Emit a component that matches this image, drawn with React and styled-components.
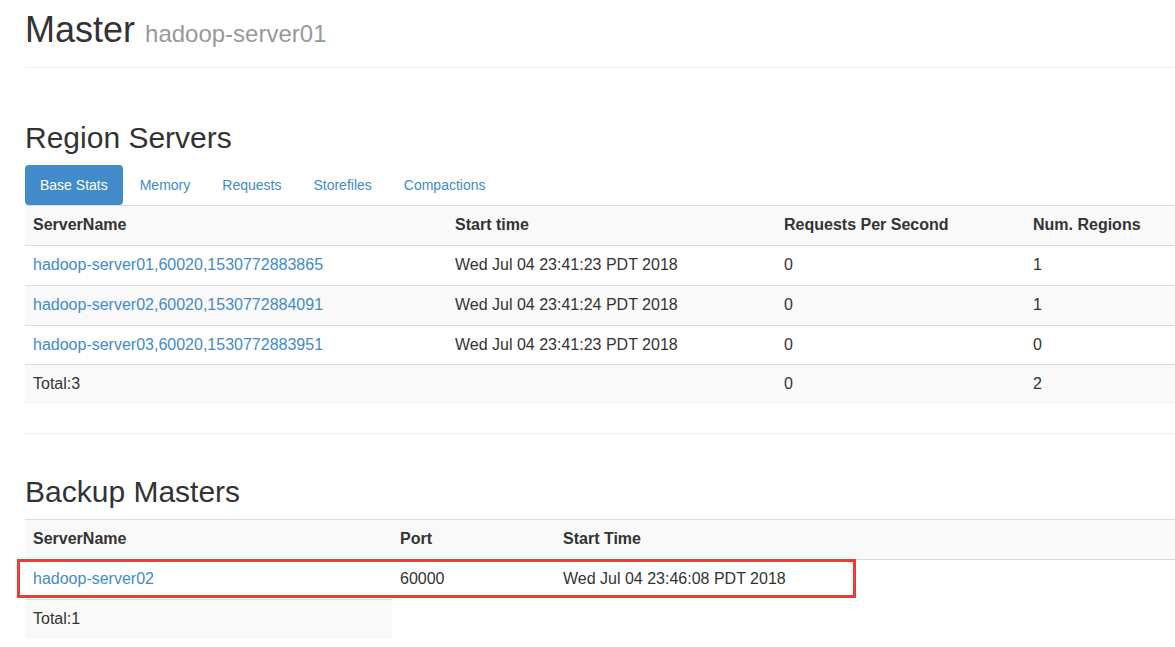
import React from 'react';
import styled, { createGlobalStyle } from 'styled-components';

const GlobalStyle = createGlobalStyle`
  html, body {
    margin: 0;
    padding: 0;
    background: #fff;
    overflow: hidden;
  }
  body {
    font-family: "Liberation Sans", Arial, Helvetica, sans-serif;
    font-size: 14px;
    line-height: 1.42857;
    color: #333;
  }
`;

const Container = styled.div`
  width: 1200px;
  padding-left: 25px;
`;

const PageHeader = styled.div`
  padding-bottom: 9px;
  border-bottom: 1px solid #eee;
`;

const Title = styled.h1`
  margin: 10px 0 8px;
  font-size: 36px;
  font-weight: 500;
  line-height: 40px;
  > small {
    font-size: 24px;
    line-height: 1;
    font-weight: normal;
    color: #999;
  }
`;

const SectionTitle = styled.h2`
  margin: ${p => p.top}px 0 11px;
  font-size: 30px;
  font-weight: 500;
  line-height: 33px;
`;

const Pills = styled.ul`
  display: flex;
  list-style: none;
  margin: 0;
  padding: 0;
  gap: 2px;
`;

const Pill = styled.li`
  > a {
    display: block;
    padding: 10px 15px;
    line-height: 20px;
    border-radius: 4px;
    text-decoration: none;
    color: ${p => (p.active ? '#fff' : '#428bca')};
    background: ${p => (p.active ? '#428bca' : 'transparent')};
  }
`;

const Table = styled.table`
  width: 100%;
  border-collapse: collapse;
  border-spacing: 0;
  font-size: 16px;
  line-height: 1.42857;
  tr:nth-child(odd) > td,
  tr:nth-child(odd) > th {
    background: #f9f9f9;
  }
  td, th {
    padding: 8px;
    text-align: left;
    vertical-align: top;
    border-top: 1px solid #ddd;
  }
  th {
    font-weight: bold;
  }
  a {
    color: #428bca;
    text-decoration: none;
  }
`;

const Col = styled.col`
  width: ${p => p.w}px;
`;

const Rule = styled.hr`
  margin: 29px 0 0;
  border: 0;
  border-top: 1px solid #eee;
`;

const Framed = styled.div`
  position: relative;
`;

const Highlight = styled.div`
  position: absolute;
  top: 40px;
  left: -8px;
  width: 839px;
  height: 39px;
  box-sizing: border-box;
  border: 3px solid #ef3a3a;
  pointer-events: none;
`;

const regionServers = [
  ['hadoop-server01,60020,1530772883865', 'Wed Jul 04 23:41:23 PDT 2018', 0, 1],
  ['hadoop-server02,60020,1530772884091', 'Wed Jul 04 23:41:24 PDT 2018', 0, 1],
  ['hadoop-server03,60020,1530772883951', 'Wed Jul 04 23:41:23 PDT 2018', 0, 0],
];

const tabs = ['Base Stats', 'Memory', 'Requests', 'Storefiles', 'Compactions'];

export default function App() {
  return (
    <Container>
      <GlobalStyle />
      <PageHeader>
        <Title>
          Master <small>hadoop-server01</small>
        </Title>
      </PageHeader>

      <SectionTitle top={53}>Region Servers</SectionTitle>
      <Pills>
        {tabs.map((t, i) => (
          <Pill key={t} active={i === 0}>
            <a href="#">{t}</a>
          </Pill>
        ))}
      </Pills>
      <Table>
        <colgroup>
          <Col w={422} />
          <Col w={329} />
          <Col w={249} />
          <col />
        </colgroup>
        <tbody>
          <tr>
            <th>ServerName</th>
            <th>Start time</th>
            <th>Requests Per Second</th>
            <th>Num. Regions</th>
          </tr>
          {regionServers.map(r => (
            <tr key={r[0]}>
              <td><a href="#">{r[0]}</a></td>
              <td>{r[1]}</td>
              <td>{r[2]}</td>
              <td>{r[3]}</td>
            </tr>
          ))}
          <tr>
            <td>Total:3</td>
            <td></td>
            <td>0</td>
            <td>2</td>
          </tr>
        </tbody>
      </Table>

      <Rule />

      <SectionTitle top={41}>Backup Masters</SectionTitle>
      <Framed>
        <Table>
          <colgroup>
            <Col w={367} />
            <Col w={163} />
            <col />
          </colgroup>
          <tbody>
            <tr>
              <th>ServerName</th>
              <th>Port</th>
              <th>Start Time</th>
            </tr>
            <tr>
              <td><a href="#">hadoop-server02</a></td>
              <td>60000</td>
              <td>Wed Jul 04 23:46:08 PDT 2018</td>
            </tr>
            <tr>
              <td>Total:1</td>
            </tr>
          </tbody>
        </Table>
        <Highlight />
      </Framed>
    </Container>
  );
}
